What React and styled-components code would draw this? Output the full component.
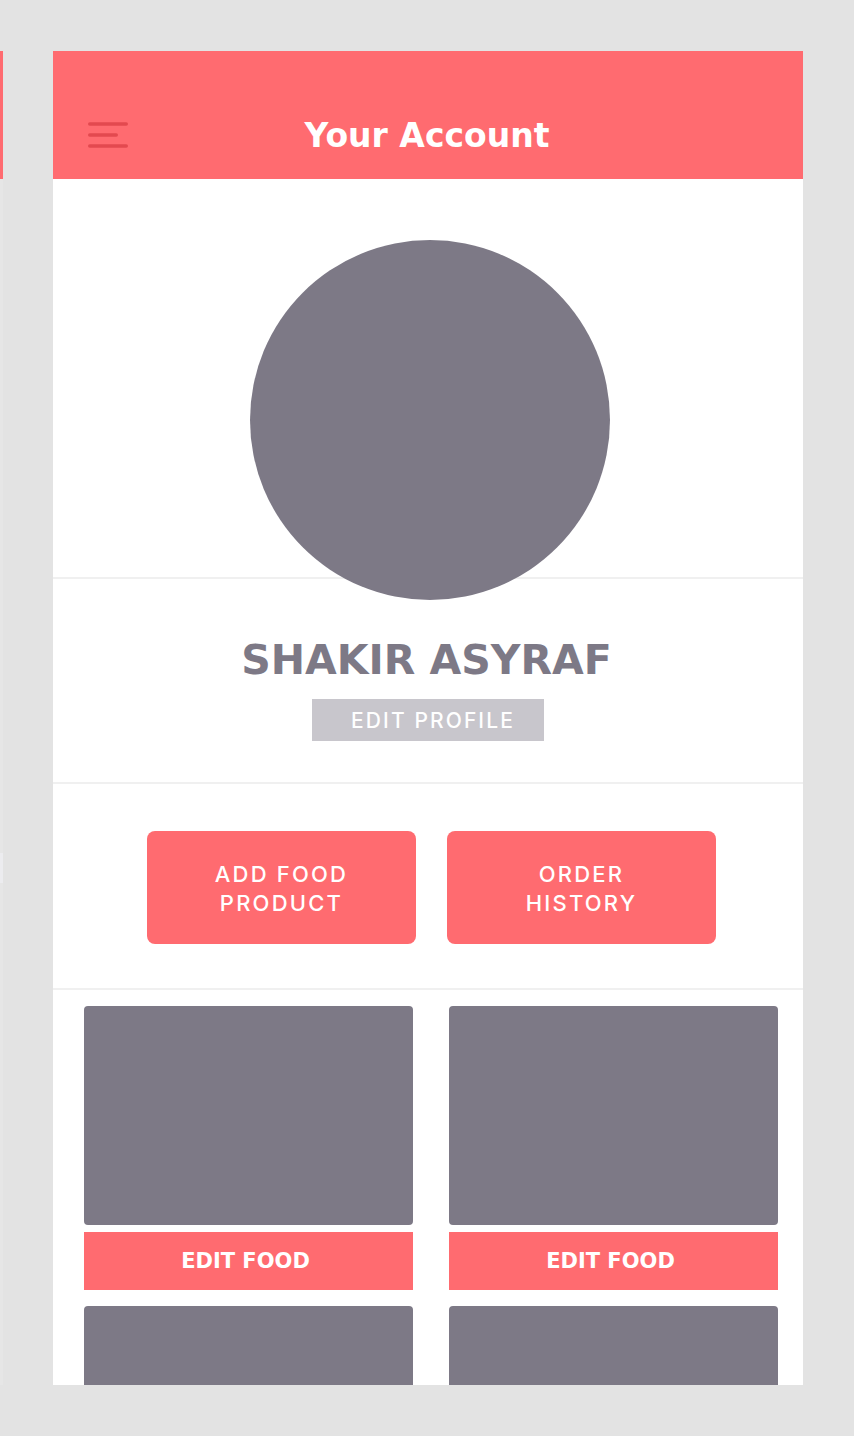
// 내 계정 화면: 헤더, 프로필, 액션 버튼, 음식 목록
import React from 'react';
import styled, { createGlobalStyle } from 'styled-components';

const foods = [1, 2, 3, 4];

const App = () => {
  return (
    <>
      <GlobalStyle />
      <Canvas>
        <PrevScreen>
          <PrevHeader />
          <PrevBlock />
        </PrevScreen>

        <Screen>
          <Header>
            <MenuButton aria-label="menu">
              <svg width="40" height="26" viewBox="0 0 40 26">
                <g stroke="#e3494f" strokeWidth="3.5" strokeLinecap="round">
                  <line x1="1.75" y1="2" x2="38.25" y2="2" />
                  <line x1="1.75" y1="13" x2="28.25" y2="13" />
                  <line x1="1.75" y1="24" x2="38.25" y2="24" />
                </g>
              </svg>
            </MenuButton>
            <Title>Your Account</Title>
            <span />
          </Header>

          <AvatarSection>
            <Avatar />
          </AvatarSection>

          <ProfileSection>
            <Name>SHAKIR ASYRAF</Name>
            <EditProfile>EDIT PROFILE</EditProfile>
          </ProfileSection>

          <ActionSection>
            <ActionButton>
              ADD FOOD
              <br />
              PRODUCT
            </ActionButton>
            <ActionButton>
              ORDER
              <br />
              HISTORY
            </ActionButton>
          </ActionSection>

          <FoodGrid>
            {foods.map((id) => (
              <FoodCard key={id}>
                <FoodImage />
                <EditFood>EDIT FOOD</EditFood>
              </FoodCard>
            ))}
          </FoodGrid>
        </Screen>
      </Canvas>
    </>
  );
};

export default App;

// --- Styled Components ---

const GlobalStyle = createGlobalStyle`
  html, body {
    margin: 0;
    padding: 0;
    background: #e3e3e3;
  }
  * {
    box-sizing: border-box;
  }
`;

const Canvas = styled.div`
  display: flex;
  align-items: flex-start;
  height: 1436px;
  padding-top: 51px;
  overflow: hidden;
`;

const PrevScreen = styled.div`
  display: flex;
  flex-direction: column;
  width: 3px;
  height: 1334px;
  background: #e6e6e6;
`;

const PrevHeader = styled.div`
  height: 128px;
  background: #ff6b70;
`;

const PrevBlock = styled.div`
  height: 30px;
  margin-top: 674px;
  background: #ececef;
`;

const Screen = styled.div`
  display: flex;
  flex-direction: column;
  width: 750px;
  height: 1334px;
  margin-left: 50px;
  background: #ffffff;
  overflow: hidden;
  font-family: 'DejaVu Sans', 'Liberation Sans', sans-serif;
`;

const Header = styled.header`
  display: grid;
  grid-template-columns: 1fr auto 1fr;
  align-items: center;
  height: 128px;
  padding: 40px 35px 0;
  background: #ff6b70;
  flex-shrink: 0;
`;

const MenuButton = styled.div`
  display: flex;
  align-items: center;
`;

const Title = styled.h1`
  margin: 0 0 0 -2px;
  color: #ffffff;
  font-size: 33px;
  font-weight: 700;
`;

const AvatarSection = styled.section`
  display: flex;
  justify-content: center;
  padding: 61px 0 0 4px;
  border-bottom: 2px solid #f0f0f0;
  flex-shrink: 0;
`;

const Avatar = styled.div`
  position: relative;
  z-index: 1;
  width: 360px;
  height: 360px;
  margin-bottom: -23px;
  border-radius: 50%;
  background: #7d7986;
`;

const ProfileSection = styled.section`
  display: flex;
  flex-direction: column;
  align-items: center;
  gap: 18px;
  padding: 61px 0 41px;
  border-bottom: 2px solid #f0f0f0;
  flex-shrink: 0;
`;

const Name = styled.h2`
  margin: 0 3px 0 0;
  color: #7d7986;
  font-size: 41px;
  line-height: 41px;
  font-weight: 700;
`;

const EditProfile = styled.div`
  display: flex;
  align-items: center;
  justify-content: center;
  width: 232px;
  height: 42px;
  padding-left: 10px;
  background: #c8c6cc;
  color: #ffffff;
  font-family: Inter, 'DejaVu Sans', sans-serif;
  font-size: 21px;
  font-weight: 500;
  letter-spacing: 2.1px;
`;

const ActionSection = styled.section`
  display: flex;
  gap: 31px;
  padding: 47px 0 44px 94px;
  border-bottom: 2px solid #f0f0f0;
  flex-shrink: 0;
`;

const ActionButton = styled.div`
  display: flex;
  align-items: center;
  justify-content: center;
  width: 269px;
  height: 113px;
  padding-top: 2px;
  border-radius: 8px;
  background: #ff6b70;
  color: #ffffff;
  font-family: Inter, 'DejaVu Sans', sans-serif;
  font-size: 22px;
  font-weight: 500;
  line-height: 29px;
  letter-spacing: 2.2px;
  text-align: center;
`;

const FoodGrid = styled.section`
  display: grid;
  grid-template-columns: 329px 329px;
  column-gap: 36px;
  row-gap: 16px;
  padding: 16px 0 0 31px;
`;

const FoodCard = styled.div`
  display: flex;
  flex-direction: column;
  gap: 7px;
`;

const FoodImage = styled.div`
  height: 219px;
  border-radius: 4px;
  background: #7d7986;
`;

const EditFood = styled.div`
  display: flex;
  align-items: center;
  justify-content: center;
  height: 58px;
  padding-right: 6px;
  background: #ff6b70;
  color: #ffffff;
  font-size: 21px;
  font-weight: 700;
`;
